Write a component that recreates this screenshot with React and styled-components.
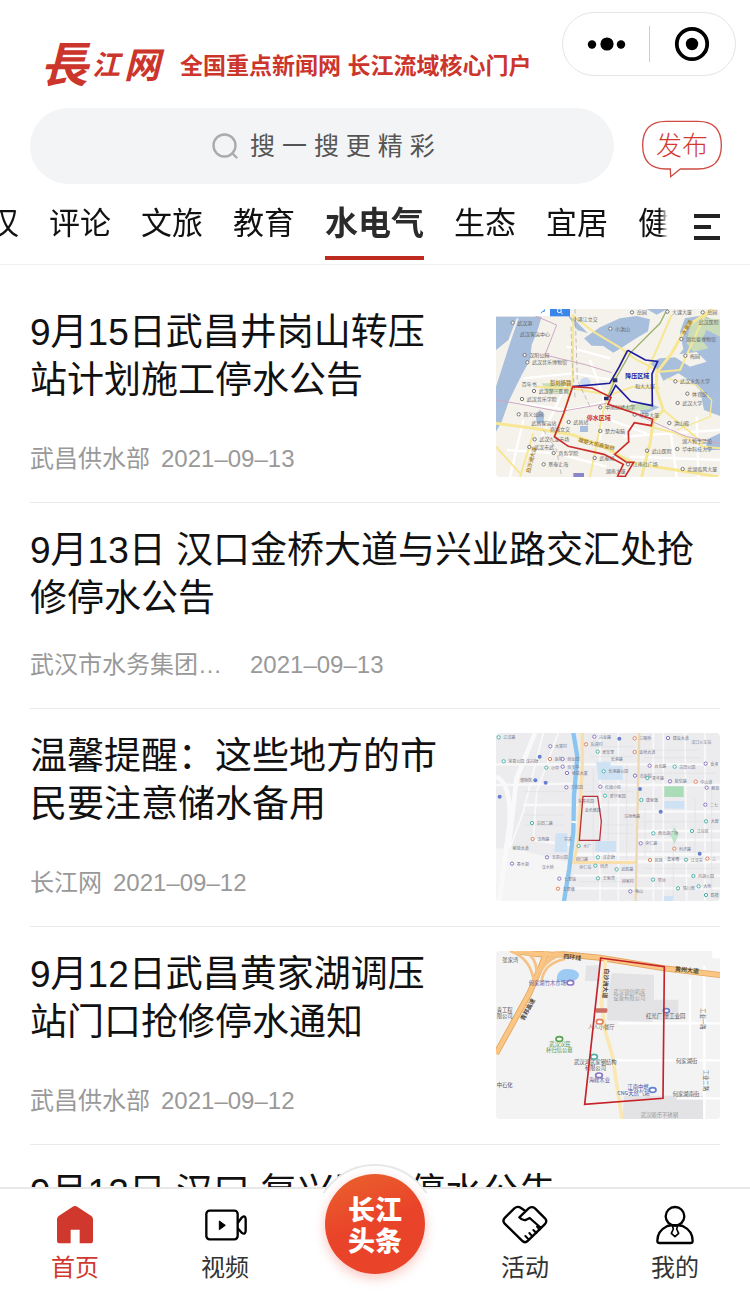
import { useLayoutEffect, useRef, useState } from "react";
import styled, { createGlobalStyle, css } from "styled-components";

const GlobalStyle = createGlobalStyle`
* {
    box-sizing: border-box;
}
body {
    margin: 0;
    background: #fff;
    color: #111;
    font-family: "Liberation Sans", "Noto Sans CJK SC", sans-serif;
}
button, input {
    font: inherit;
    border: 0;
    padding: 0;
    background: none;
    color: inherit;
}
button {
    cursor: pointer;
}
`;

const channels = ["武汉", "评论", "文旅", "教育", "水电气", "生态", "宜居", "健康"];

const news = [
    { title: "9月15日武昌井岗山转压站计划施工停水公告", source: "武昌供水部", date: "2021–09–13", map: "wuchang" },
    { title: "9月13日 汉口金桥大道与兴业路交汇处抢修停水公告", source: "武汉市水务集团…", date: "2021–09–13", wide: true },
    { title: "温馨提醒：这些地方的市民要注意储水备用", source: "长江网", date: "2021–09–12", map: "street" },
    { title: "9月12日武昌黄家湖调压站门口抢修停水通知", source: "武昌供水部", date: "2021–09–12", map: "lake" },
    { title: "9月12日 汉口 复兴路段停水公告", source: "武汉市水务集团…", date: "2021–09–12", wide: true },
];

const App = () => {
    const [channel, setChannel] = useState("水电气");

    return (
        <Page>
            <GlobalStyle />
            <Header>
                <TopRow>
                    <Brand>
                        <Logo><big>長</big><small>江</small><span>网</span></Logo>
                        <Slogan>全国重点新闻网 长江流域核心门户</Slogan>
                    </Brand>
                    <Capsule />
                </TopRow>
                <SearchRow>
                    <SearchBox>
                        <svg width="26" height="26" viewBox="0 0 26 26" fill="none" stroke="#a9abad" strokeWidth="2.4" strokeLinecap="round">
                            <circle cx="12.500" cy="12.500" r="11" />
                            <path d="M20.500 20.500 L24.500 24.500" />
                        </svg>
                        <input type="text" aria-label="搜索" placeholder="搜 一 搜 更 精 彩" />
                    </SearchBox>
                    <Publish type="button">
                        <svg viewBox="150 56 252 186" fill="none" stroke="#cf4a43" strokeWidth="4" aria-hidden="true">
                            <path d="M228 63 H324 Q394 63 394 135 Q394 206 324 206 H271 L242 229 L241 206 H228 Q158 206 158 135 Q158 63 228 63 Z" />
                        </svg>
                        <span>发布</span>
                    </Publish>
                </SearchRow>
                <Channels active={channel} onChange={setChannel} />
            </Header>
            <List>
                {news.map((item, i) => (
                    <NewsItem key={i} {...item} />
                ))}
            </List>
            <TabBar />
        </Page>
    );
};

const Capsule = () => (
    <CapsuleStyled>
        <button type="button" aria-label="更多">
            <svg width="40" height="16" viewBox="0 0 40 16">
                <circle cx="6" cy="8.500" r="4.200" />
                <circle cx="21" cy="8" r="6.600" />
                <circle cx="35" cy="8.500" r="4.200" />
            </svg>
        </button>
        <button type="button" aria-label="关闭">
            <svg width="36" height="36" viewBox="0 0 36 36">
                <circle cx="18" cy="18" r="15.200" fill="none" stroke="#000" strokeWidth="3.800" />
                <circle cx="18" cy="18" r="6.200" />
            </svg>
        </button>
    </CapsuleStyled>
);

const Channels = ({ active, onChange }) => {
    const scroller = useRef(null);

    useLayoutEffect(() => {
        scroller.current.scrollLeft = 43;
    }, []);

    return (
        <ChannelRow>
            <ChannelScroller ref={scroller}>
                {channels.map((name) => (
                    <Channel key={name} type="button" $active={name === active} onClick={() => onChange(name)}>
                        {name}
                    </Channel>
                ))}
            </ChannelScroller>
            <MenuButton type="button" aria-label="全部频道">
                <svg width="26" height="26" viewBox="0 0 26 26" fill="#222">
                    <path d="M0 0h26v4H0zM0 11h17v4H0zM0 22h26v4H0z" />
                </svg>
            </MenuButton>
        </ChannelRow>
    );
};

const NewsItem = ({ title, source, date, map, wide }) => (
    <Item>
        <ItemText>
            <h2>{title}</h2>
            <Meta $wide={wide}><span>{source}</span><span>{date}</span></Meta>
        </ItemText>
        {map === "wuchang" && <WuchangMap />}
        {map === "street" && <StreetMap />}
        {map === "lake" && <LakeMap />}
    </Item>
);

const Labels = ({ items, size = 15, color = "#666" }) => (
    <g fontSize={size} fill={color}>
        {items.map(([x, y, text, dot], i) => (
            <g key={i}>
                <text x={x} y={y}>{text}</text>
                {dot && <circle cx={x - 14} cy={y - 6} r="5" fill="#fff" stroke={dot} strokeWidth="3" />}
            </g>
        ))}
    </g>
);

const wuchangLabels = [
    [82, 74, "武汉港", "#777"], [90, 107, "武汉客运中心"], [118, 171, "汉阳公园", "#777"], [126, 193, "武汉音乐博物馆", "#777"],
    [248, 63, "小港江立交"], [546, 41, "大课大厦", "#777"], [440, 43, "岳园", "#777"], [375, 92, "小洪山", "#777"],
    [588, 123, "湖北省博物馆", "#777"], [600, 173, "梅园", "#777"], [626, 72, "武汉医院"], [570, 250, "武汉水务大学", "#777"],
    [606, 287, "体育馆", "#777"], [577, 315, "武汉大学", "#777"], [95, 259, "百年书"], [146, 279, "武汉第三医院", "#777"],
    [110, 303, "武汉音乐学院", "#777"], [100, 349, "首义公园", "#777"], [124, 376, "武昌客运站"], [180, 393, "商城立交"],
    [250, 372, "武昌站", "#777"], [345, 399, "楚力电脑", "#777"], [148, 424, "武汉九龙市场", "#777"], [132, 447, "武汉市武", "#777"],
    [205, 465, "商务学院", "#777"], [175, 499, "景泰上海", "#777"], [345, 328, "中南财经大学", "#777"], [448, 350, "华夏大厦", "#777"],
    [435, 263, "和大大厦"], [552, 375, "洪山殿", "#777"], [485, 458, "武山医院", "#777"], [576, 453, "华中科技大学", "#777"],
    [576, 429, "湖人物生活馆"], [592, 513, "北湖临风大厦", "#777"], [428, 499, "江南社广场", "#777"], [347, 518, "湖南大厦"],
    [328, 480, "武泰闸", "#777"], [652, 43, "岳园", "#777"],
];

const WuchangMap = () => (
    <Thumb viewBox="18 27 672 504" preserveAspectRatio="xMidYMid slice" role="img" aria-label="武昌停水区域地图">
        <rect x="18" y="27" width="672" height="504" fill="#f4f2eb" />
        <path d="M18 50 H155 L142 92 L125 135 L120 180 L95 225 L58 300 L35 365 L18 395 Z" fill="#a7bedc" />
        <path d="M18 150 L55 120 L80 55 H86 L60 130 L18 260 Z" fill="#f4f2eb" />
        <path d="M282 115 L330 82 L390 55 L440 48 L480 58 L474 94 L430 120 L395 143 L370 158 L340 138 L305 137 Z M470 27 H532 L500 44 Z M232 44 L255 60 L294 100 L262 90 Z" fill="#a7bedc" />
        <path d="M585 55 L640 46 L690 70 V348 L642 330 L630 270 L605 245 L565 220 L520 242 L506 212 L478 190 L510 175 L560 172 L580 148 L570 95 Z" fill="#a7bedc" />
        <path d="M600 75 L640 55 L690 58 V110 L650 90 L635 120 L655 145 L610 155 L590 130 Z" fill="#cbdcb8" />
        <path d="M545 165 L620 156 L650 185 L600 200 Z" fill="#f4f2eb" />
        <path d="M137 342 L150 330 L163 342 L160 370 L140 368 Z M270 378 H294 V396 H270 Z M655 416 L690 400 V450 H645 Z M448 330 L490 315 L508 322 L460 344 Z" fill="#a7bedc" />
        <path d="M155 250 H235 V278 H170 Z M380 326 L430 312 L490 312 L480 328 L420 334 Z" fill="#c9dfba" />
        <circle cx="286" cy="248" r="16" fill="#cbdcf2" />
        <g fill="none" stroke="#fff" strokeWidth="7">
            <path d="M100 235 L250 220 L360 238 M90 310 L240 330 L350 305 M150 420 L230 250 M50 450 L200 460 L350 500 M300 180 L340 290 L330 420 M400 410 L690 390 M420 470 L690 480 M540 380 L560 531 M620 350 L625 531 M360 360 L470 400 M100 360 L60 531 M230 140 L360 175" />
        </g>
        <g fill="none" stroke="#f7e795" strokeWidth="6">
            <path d="M245 45 L310 95 L390 143 L440 180 L510 215 L570 210 L640 55 L668 27" />
            <path d="M668 27 L590 80 L545 160 L500 218 L500 270 L520 330 L490 365 L480 430 L455 531" strokeWidth="9" />
            <path d="M18 370 L130 385 L250 405 L340 440 L430 490 L690 531" strokeWidth="9" />
            <path d="M135 260 L240 265 L360 285 L430 260 L510 265 M410 150 L370 240 L340 330 L300 531 M250 45 L248 240 L220 350 L195 410 M520 330 L640 430 M480 380 L560 400 L640 440 L690 445 M130 400 L90 531 M18 440 L90 520 M545 45 L460 240" />
            <path d="M530 235 L620 255 L665 300 L660 350 L560 390" strokeWidth="4" />
        </g>
        <path d="M18 300 L90 312 L210 335 L350 310 L430 340 L590 410 L690 430 M130 45 L200 75 L165 165 L290 195 L365 218" fill="none" stroke="#cfa8c4" strokeWidth="3" />
        <path d="M532 27 L510 70 L420 160 L375 240 L350 300" fill="none" stroke="#9cb06c" strokeWidth="4" />
        <path d="M243 80 L246 180 L256 300 M160 390 L200 450 L215 531 M255 27 L262 240 L300 320" fill="none" stroke="#a5a5a5" strokeWidth="2" strokeDasharray="14 8" />
        <Labels items={wuchangLabels} />
        <g fontSize="16" fill="#a9862b" fontWeight="700">
            <text x="180" y="256">彭刘杨路</text>
            <text transform="rotate(14 265 420)" x="265" y="425">雄楚大街高架桥</text>
            <text transform="rotate(-60 585 95)" x="575" y="100">水果湖</text>
            <text transform="rotate(-75 115 520)" x="116" y="524">白沙洲大道</text>
        </g>
        <path d="M413 151 L466 180 L503 184 L486 222 L487 317 L422 304 L377 256 L358 292 M413 151 L388 200 L359 250 L248 260" fill="none" stroke="#1f1e9d" strokeWidth="5" />
        <path d="M248 260 L306 264 L363 292 L354 313 L488 358 L484 377 L433 368 L415 395 L416 426 L374 463 L408 486 L431 487 L405 530 L383 528 L400 493 L342 463 L235 439 L193 410 L221 340 Z" fill="none" stroke="#cb2b29" strokeWidth="5" />
        <path d="M368 235h14v12h-14z M342 290h14v11h-14z" fill="#26306d" />
        <text x="406" y="234" fontSize="18" fontWeight="700" fill="#1c1ba5">降压区域</text>
        <text x="290" y="361" fontSize="18" fontWeight="700" fill="#d12c29">停水区域</text>
        <path d="M18 27 H180 V48 H18 Z" fill="#fff" />
        <rect x="180" y="27" width="60" height="22" fill="#3b86ea" />
        <circle cx="208" cy="32" r="6" fill="none" stroke="#fff" strokeWidth="3" />
        <path d="M212 37 L218 42" stroke="#fff" strokeWidth="3" />
        <path d="M153 40 L158 34 H163 V28" fill="none" stroke="#3b86ea" strokeWidth="3" />
        <rect x="250" y="519" width="32" height="12" fill="#8987c7" />
    </Thumb>
);

const purple = "#8a76c4";
const teal = "#4fb3ab";
const orange = "#de8460";
const blue = "#6680cf";

const streetLabels = [
    [40, 43, "江汉路", teal], [55, 115, "常青公园", teal], [195, 70, "大富村", purple], [108, 115, "汉兴街"], [194, 108, "医院", orange],
    [232, 108, "创业园", purple], [232, 131, "百步亭", purple], [245, 150, "地铁大厦", purple], [183, 134, "小学", teal], [90, 170, "博物馆"],
    [302, 64, "后湖村", orange], [327, 41, "兴业路", purple], [337, 86, "居安里", teal], [355, 145, "长港路公园", teal], [362, 107, "长港路"],
    [448, 46, "三眼桥", orange], [448, 87, "金桥大道", orange], [449, 158, "市医院", purple], [493, 128, "台北路", purple], [548, 45, "建设大道", purple],
    [604, 58, "汉口火车站"], [661, 122, "香港", purple], [568, 131, "古田公园", teal], [486, 165, "青年路", teal], [554, 175, "航空路", purple],
    [631, 176, "中山道", orange], [664, 194, "解放", purple], [345, 191, "红旗小区", purple], [359, 218, "新华家园", teal], [243, 193, "万松园", purple],
    [264, 234, "常青花园"], [284, 260, "金色雅园"], [402, 279, "马场角路"], [468, 231, "唐家墩", teal], [660, 245, "二七", purple],
    [504, 331, "西北湖广场", teal], [662, 295, "大智", teal], [620, 324, "江岸区", teal], [142, 348, "汉西路", orange], [140, 300, "古田二路", teal],
    [222, 349, "宗关"], [280, 369, "水厂", teal], [466, 361, "崇仁路", purple], [567, 377, "利济路", orange], [185, 403, "玉带公园", purple],
    [338, 403, "汉正街", teal], [258, 408, "硚口路"], [330, 428, "同济", teal], [155, 432, "汉水桥"], [80, 422, "墨水湖", purple],
    [268, 433, "崇仁站"], [394, 439, "武胜路", teal], [494, 411, "民族", orange], [532, 409, "集家嘴"], [602, 410, "江汉关", teal],
    [666, 407, "三", orange], [503, 470, "琴台", teal], [624, 459, "月湖公园", teal], [222, 467, "七里庙", purple], [218, 497, "五里墩", orange],
    [338, 466, "王家湾", teal], [395, 475, "钟家村"], [435, 505, "龟山", purple], [578, 496, "晴川阁", teal], [640, 490, "大桥", teal],
    [662, 516, "鹤楼", teal],
];

const StreetMap = () => (
    <Thumb viewBox="18 24 672 504" preserveAspectRatio="xMidYMid slice" role="img" aria-label="汉口街区地图">
        <rect x="18" y="24" width="672" height="504" fill="#ececee" />
        <path d="M18 370 L80 372 L235 412 L215 528 H18 Z" fill="#f5f5f6" />
        <g fill="none" stroke="#f9f9fa" strokeWidth="7">
            <path d="M18 118 H690 M18 180 L250 176 M330 180 H690 M100 240 H440 M440 260 H690 M440 318 H690 M130 345 L240 360 M440 345 H690 M250 452 H690 M240 490 H690" />
            <path d="M160 24 L100 260 L60 370 M205 24 L140 200 L130 340 M330 24 V528 M385 24 V528 M490 24 V528 M520 24 V528 M585 24 L590 528 M645 24 V528" strokeWidth="5" />
            <path d="M18 155 Q65 175 58 300 L28 528 M135 24 L80 160 L55 370" strokeWidth="14" />
            <path d="M235 410 H690 M250 388 H690" strokeWidth="10" />
        </g>
        <path d="M300 65 H430 M300 95 H430 M460 75 H630 M460 98 H630 M455 145 H680 M280 200 H430 M340 300 H430 M340 325 H430 M455 290 H650 M455 380 H650 M270 470 H430 M460 430 H680 M100 200 H230 M100 270 H220 M100 300 H220 M310 130 V400 M355 200 V410 M410 120 V410 M465 250 V400 M550 300 V520 M615 220 V400 M665 190 V500" stroke="#e0e0e3" strokeWidth="2" fill="none" />
        <path d="M318 110 H362 V122 H398 V164 H325 Z M523 228 H583 V251 H523 Z M316 348 H378 V381 H316 Z M197 325 H232 V382 H193 Z M522 513 H550 V528 H522 Z" fill="#cfe2f4" />
        <path d="M523 184 H581 V216 H523 Z" fill="#a9dcb7" />
        <path d="M554 307 L566 328 L554 357 L541 330 Z" fill="#bce4c6" />
        <path d="M277 24 V130 L265 352 L250 412 L438 412" fill="none" stroke="#fadfae" strokeWidth="10" />
        <path d="M448 24 L443 230 L437 528" fill="none" stroke="#ecd9b4" strokeWidth="7" />
        <path d="M250 24 L262 95 L252 210 L250 320 L238 430 L222 528" fill="none" stroke="#8ac5ef" strokeWidth="13" />
        <path d="M244 290 L260 292" stroke="#fff" strokeWidth="5" />
        <Labels items={streetLabels} size={12} color="#77778c" />
        <g fill={blue}>
            <circle cx="388" cy="41" r="6" />
            <circle cx="149" cy="95" r="6" />
            <circle cx="136" cy="166" r="6" />
            <circle cx="167" cy="173" r="6" />
            <circle cx="29" cy="215" r="6" />
            <circle cx="512" cy="260" r="6" />
            <circle cx="629" cy="386" r="6" />
            <circle cx="450" cy="192" r="6" />
        </g>
        <text x="68" y="375" fontSize="12" fill="#777">解放大道</text>
        <path d="M279 214 L323 214 L334 289 L329 346 H268 Z" fill="none" stroke="#b8323c" strokeWidth="4" />
    </Thumb>
);

const LakeMap = () => (
    <Thumb viewBox="18 18 672 504" preserveAspectRatio="xMidYMid slice" role="img" aria-label="黄家湖停水区域地图">
        <rect x="18" y="18" width="672" height="504" fill="#f3f3f4" />
        <path d="M288 62 L330 60 V108 H285 Z M365 84 L492 90 V164 H565 V225 H487 V231 L352 226 V165 Z M402 452 H640 V522 H397 Z" fill="#e3e3e5" />
        <path d="M200 107 Q200 70 234 72 Q266 72 267 92 Q265 108 230 112 Z" fill="#9dcaf3" />
        <path d="M385 235 H690 M350 346 H690 M643 62 V522 M560 460 H690 M600 100 V340" stroke="#fff" strokeWidth="7" fill="none" />
        <g fill="none" stroke="#e0a45d" strokeWidth="18">
            <path d="M18 326 L60 250 L118 145 L155 60 L170 18" />
            <path d="M78 18 Q150 32 222 28 L330 38 L522 70 L690 90" />
        </g>
        <g fill="none" stroke="#fbc683" strokeWidth="13">
            <path d="M18 326 L60 250 L118 145 L155 60 L170 18" />
            <path d="M78 18 Q150 32 222 28 L330 38 L522 70 L690 90" />
        </g>
        <g fill="none" stroke="#f6c283" strokeWidth="8">
            <path d="M60 18 Q125 40 132 115 M100 18 Q145 40 138 85 M145 90 Q175 30 240 26 M155 110 Q160 55 225 42 M205 18 Q160 48 142 100" />
        </g>
        <path d="M347 45 L340 105 L335 180 L345 255 L368 335 L378 405 L396 522" fill="none" stroke="#fbe7b1" strokeWidth="11" />
        <g fontSize="16" fill="#555">
            <text x="37" y="51">张家湾</text>
            <text x="20" y="200">青工程</text>
            <text x="20" y="218">限公司</text>
            <text x="20" y="426">中石化</text>
            <text x="116" y="119" fill="#66589d">何家湖竹木市场</text>
            <text x="468" y="219">红光厂</text>
            <text x="522" y="219">金工业园</text>
            <text x="294" y="252" fill="#876b50">人人小餐厅</text>
            <text x="178" y="304" fill="#4b9045">武汉汉民</text>
            <text x="168" y="322" fill="#4b9045">杯归信公墓</text>
            <text x="252" y="356">武汉鸿武家钢结构</text>
            <text x="284" y="374">有限公司</text>
            <text x="296" y="412" fill="#66589d">海峰木业</text>
            <text x="412" y="432" fill="#3851a3">江南中燃</text>
            <text x="382" y="450" fill="#3851a3">CNG天然气站</text>
            <text x="558" y="354">何家湖街</text>
            <text x="548" y="452">何家湖南街</text>
            <text x="452" y="516" fill="#999">武汉顺乐不锈钢</text>
            <text x="370" y="146" fill="#999">武汉锦创机床</text>
            <text x="370" y="164" fill="#999">设备有限公司</text>
            <text transform="rotate(90 638 190)" x="638" y="194">工业一路</text>
            <text transform="rotate(90 638 374)" x="638" y="370">工业二路</text>
        </g>
        <g fontSize="18" fontWeight="700" fill="#4f4636">
            <text transform="rotate(7 220 35)" x="220" y="40">四环线</text>
            <text transform="rotate(6 555 74)" x="555" y="78">黄州大道</text>
            <text transform="rotate(-62 96 225)" x="96" y="232">青郑高速</text>
            <text transform="rotate(94 350 70)" x="350" y="76">白沙洲大道</text>
        </g>
        <rect x="317" y="190" width="35" height="13" rx="3" fill="#ca6f62" />
        <g fill="#fff" strokeWidth="5">
            <ellipse cx="241" cy="113" rx="10" ry="7" stroke={purple} />
            <ellipse cx="329" cy="230" rx="10" ry="7" stroke={orange} />
            <ellipse cx="208" cy="282" rx="10" ry="7" stroke="#57a552" />
            <ellipse cx="312" cy="335" rx="10" ry="7" stroke={teal} />
            <ellipse cx="327" cy="391" rx="10" ry="7" stroke={purple} />
            <ellipse cx="488" cy="435" rx="10" ry="7" stroke={blue} />
            <ellipse cx="529" cy="197" rx="9" ry="6" stroke={blue} />
        </g>
        <path d="M332 39 L523 65 L519 460 L284 478 Z" fill="none" stroke="#c52229" strokeWidth="5" />
        <rect x="667" y="18" width="23" height="22" fill="#fff" />
    </Thumb>
);

const TabBar = () => (
    <Bar>
        <Tab href="#home" $active>
            <svg width="48" height="44" viewBox="153 128 144 132" fill="currentColor" aria-hidden="true">
                <path d="M217 140 Q225 134 233 140 L274 167 Q279 171 279 177 V241 Q279 249 271 249 H239 V208 H212 V249 H180 Q171 249 171 241 V177 Q171 171 176 167 Z" />
            </svg>
            首页
        </Tab>
        <Tab href="#video">
            <svg width="48" height="44" viewBox="603 128 144 132" fill="none" stroke="#000" strokeWidth="7" strokeLinejoin="round" aria-hidden="true">
                <rect x="619" y="151" width="94" height="86" rx="10" />
                <path d="M713 188 L726 171 Q736 164 737 176 V212 Q736 224 726 218 L713 204" />
                <path d="M658 182 L676 195 L658 208 Z" fill="#000" strokeWidth="3" />
            </svg>
            视频
        </Tab>
        <CenterTab>
            <a href="#headline">长江<br />头条</a>
        </CenterTab>
        <Tab href="#events">
            <svg width="48" height="44" viewBox="378 128 144 132" fill="none" stroke="#000" strokeWidth="7" strokeLinejoin="round" strokeLinecap="round" aria-hidden="true">
                <path d="M450 151 L438 143 Q428 136 418 144 L390 172 Q381 181 389 190 L441 241 Q450 250 459 241 L509 192 Q518 183 510 174 L480 144 Q471 137 461 144 L433 171 Q441 181 452 179 L464 173 L498 203" />
                <path d="M486 199 L494 208 M475 209 L484 218 M463 218 L472 228 M451 227 L461 237" strokeWidth="6" />
            </svg>
            活动
        </Tab>
        <Tab href="#me">
            <svg width="48" height="44" viewBox="831 128 144 132" fill="none" stroke="#000" strokeWidth="7" strokeLinejoin="round" aria-hidden="true">
                <circle cx="903" cy="168" r="28" />
                <path d="M880 197 Q850 212 850 241 Q850 248 857 248 H949 Q956 248 956 241 Q956 212 926 197 Q903 192 880 197 Z" />
                <path d="M895 196 H911 L908 206 L914 219 L903 229 L892 219 L898 206 Z" strokeWidth="5" />
            </svg>
            我的
        </Tab>
    </Bar>
);

const Page = styled.div`
display: flex;
flex-direction: column;
height: 100vh;
`;

const Header = styled.header`
border-bottom: 1px solid #f0f0f0;
`;

const TopRow = styled.div`
display: flex;
justify-content: space-between;
align-items: flex-start;
height: 108px;
padding: 12px 14px 0 40px;
`;

const Brand = styled.div`
display: flex;
align-items: center;
gap: 20px;
padding-top: 22px;
color: #cc352b;
white-space: nowrap;
`;

const Logo = styled.strong`
display: flex;
align-items: center;
gap: 4px;
height: 64px;
font-size: 36px;
font-weight: 700;
font-style: italic;
line-height: 1;
big {
    font-size: 48px;
}
small {
    font-size: 28px;
}
`;

const Slogan = styled.span`
font-size: 23px;
font-weight: 700;
line-height: 32px;
`;

const CapsuleStyled = styled.div`
display: flex;
align-items: center;
width: 174px;
height: 64px;
border: 1px solid #e5e5e5;
border-radius: 32px;
button {
    display: flex;
    flex: 1;
    align-items: center;
    justify-content: center;
    height: 36px;
}
button + button {
    border-left: 1px solid #ccc;
}
`;

const SearchRow = styled.div`
display: flex;
align-items: center;
gap: 26px;
padding: 0 26px 0 30px;
`;

const SearchBox = styled.label`
display: flex;
flex: 1;
align-items: center;
justify-content: center;
gap: 12px;
height: 76px;
padding-left: 4px;
border-radius: 38px;
background: #f3f4f6;
input {
    width: 186px;
    font-size: 25px;
    color: #333;
    outline: none;
}
input::placeholder {
    color: #555;
    opacity: 1;
}
`;

const Publish = styled.button`
position: relative;
width: 84px;
height: 62px;
margin-top: 8px;
color: #d23a31;
font-size: 26px;
font-weight: 300;
line-height: 54px;
svg {
    position: absolute;
    inset: 0;
}
span {
    display: block;
    height: 62px;
}
`;

const ChannelRow = styled.div`
display: flex;
align-items: center;
justify-content: space-between;
height: 80px;
padding-right: 30px;
`;

const ChannelScroller = styled.nav`
display: flex;
flex: 1;
gap: 30px;
height: 80px;
margin-right: 26px;
overflow-x: auto;
scrollbar-width: none;
mask-image: linear-gradient(to left, transparent, #000 8px);
`;

const Channel = styled.button`
flex: none;
height: 76px;
padding-top: 8px;
border-bottom: 4px solid transparent;
font-size: 31px;
line-height: 64px;
white-space: nowrap;
${({ $active }) => $active && css`
    border-color: #bd2a20;
    color: #2b2b2b;
    font-size: 33px;
    font-weight: 700;
`}
`;

const MenuButton = styled.button`
display: flex;
padding-top: 6px;
`;

const List = styled.main`
flex: 1;
min-height: 0;
padding: 20px 30px 0;
overflow-y: auto;
scrollbar-width: none;
`;

const Item = styled.article`
display: flex;
gap: 40px;
padding: 24px 0 25px;
border-bottom: 1px solid #ebebeb;
`;

const ItemText = styled.div`
display: flex;
flex: 1;
flex-direction: column;
justify-content: space-between;
gap: 24px;
h2 {
    margin: 0;
    font-size: 37px;
    font-weight: 400;
    line-height: 48px;
}
`;

const Meta = styled.div`
display: flex;
gap: ${({ $wide }) => ($wide ? "28px" : "11px")};
color: #999;
font-size: 24px;
line-height: 36px;
`;

const Thumb = styled.svg`
flex: none;
width: 224px;
height: 168px;
border-radius: 4px;
font-family: "Noto Sans CJK SC", sans-serif;
`;

const Bar = styled.nav`
position: relative;
z-index: 1;
display: flex;
border-top: 2px solid #e8e8e8;
background: #fff;
`;

const Tab = styled.a`
display: flex;
flex: 1;
flex-direction: column;
align-items: center;
gap: 6px;
padding: 14px 0 11px;
color: ${({ $active }) => ($active ? "#d0382e" : "#333")};
font-size: 24px;
line-height: 30px;
text-decoration: none;
`;

const CenterTab = styled.div`
position: relative;
display: flex;
flex: 1;
justify-content: center;
&::before {
    content: "";
    position: absolute;
    top: -25px;
    width: 120px;
    height: 120px;
    border: 2px solid #e8e8e8;
    border-radius: 50%;
    background: #fff;
    clip-path: inset(0 0 95px 0);
}
a {
    position: absolute;
    top: -15px;
    width: 100px;
    height: 100px;
    padding-top: 22px;
    border-radius: 50%;
    background: linear-gradient(160deg, #ea632c, #e9432a 50%);
    box-shadow: 0 4px 12px rgba(233, 67, 42, 0.3);
    color: #fff;
    font-size: 27px;
    font-weight: 900;
    line-height: 31px;
    text-align: center;
    text-decoration: none;
}
`;

export default App;
